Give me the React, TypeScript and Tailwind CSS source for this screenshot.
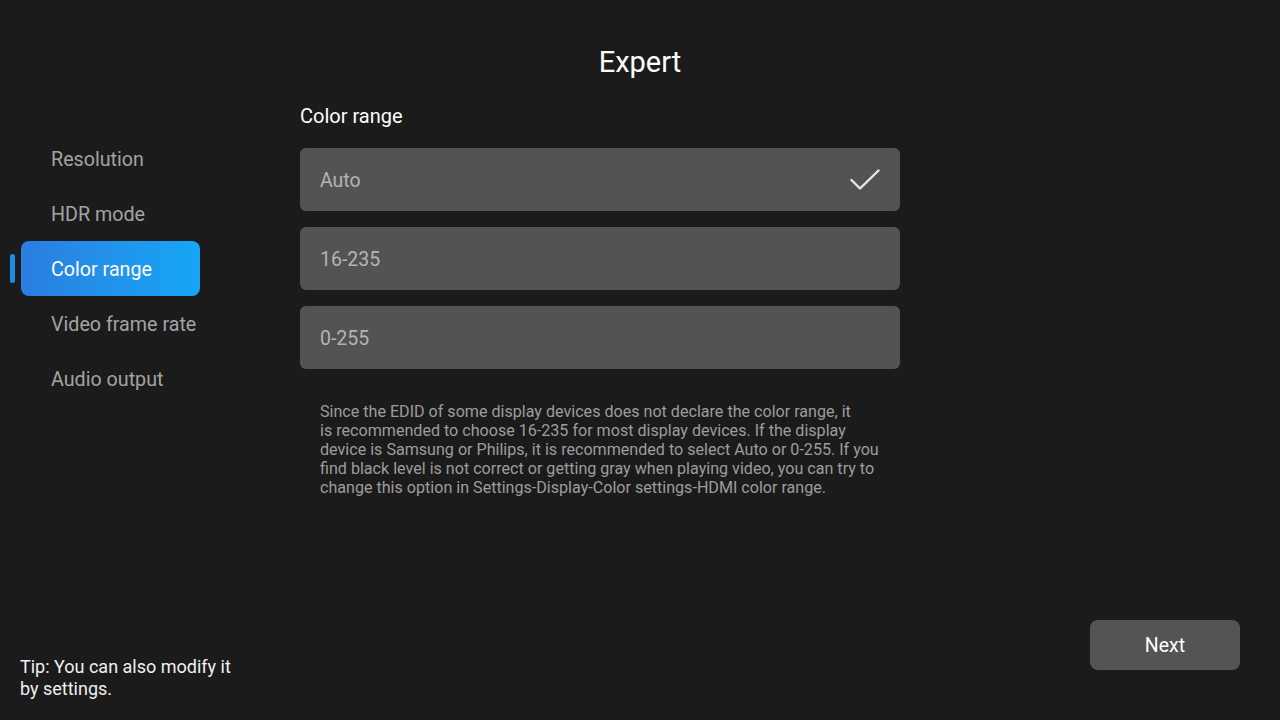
import React, { useState } from 'react';

const menuItems = ['Resolution', 'HDR mode', 'Color range', 'Video frame rate', 'Audio output'];
const options = ['Auto', '16-235', '0-255'];

const helpLines = [
    'Since the EDID of some display devices does not declare the color range, it',
    'is recommended to choose 16-235 for most display devices. If the display',
    'device is Samsung or Philips, it is recommended to select Auto or 0-255. If you',
    'find black level is not correct or getting gray when playing video, you can try to',
    'change this option in Settings-Display-Color settings-HDMI color range.',
];

export default function App() {
    const [activeMenu, setActiveMenu] = useState('Color range');
    const [selected, setSelected] = useState('Auto');

    return (
        <div className="w-[1280px] h-[720px] bg-[#1b1b1b] flex flex-col overflow-hidden font-['Roboto','Liberation_Sans',sans-serif]">
            {/* Title */}
            <div className="h-[96px] flex items-start justify-center pt-[44px]">
                <h1 className="text-[29px] leading-[36px] text-white">Expert</h1>
            </div>

            <div className="flex flex-1">
                {/* Sidebar */}
                <div className="w-[300px] pt-[35px] flex flex-col">
                    {menuItems.map(item => {
                        const active = item === activeMenu;
                        return (
                            <div key={item} className="flex items-center h-[55px]" onClick={() => setActiveMenu(item)}>
                                <div className="w-[21px] pl-[10px]">
                                    {active && <div className="w-[5px] h-[29px] rounded-full bg-[#1a8de8]" />}
                                </div>
                                <div
                                    className={
                                        active
                                            ? 'w-[179px] h-[55px] rounded-[8px] bg-gradient-to-r from-[#2a7ee0] to-[#14a6f6] flex items-center pl-[30px] pt-[3px] text-[19.7px] text-white'
                                            : 'w-[179px] h-[55px] flex items-center pl-[30px] pt-[3px] text-[19.7px] text-[#a3a3a3]'
                                    }
                                >
                                    {item}
                                </div>
                            </div>
                        );
                    })}
                </div>

                {/* Options */}
                <div className="w-[600px] flex flex-col">
                    <div className="h-[38px] flex items-center pt-[1px] text-[20px] text-white">Color range</div>
                    <div className="mt-[14px] flex flex-col gap-[16px]">
                        {options.map(opt => (
                            <div
                                key={opt}
                                onClick={() => setSelected(opt)}
                                className="h-[63px] rounded-[6px] bg-[#535353] flex items-center justify-between pl-[20px] pr-[20px] text-[19.5px] text-[#b4b4b4]"
                            >
                                <span className="pt-[3px]">{opt}</span>
                                {selected === opt && (
                                    <svg width="30" height="22" viewBox="0 0 30 22" fill="none">
                                        <path d="M1.5 11 L10 19.5 L28.5 1.5" stroke="#e8e8e8" strokeWidth="2.4" strokeLinecap="round" strokeLinejoin="round" />
                                    </svg>
                                )}
                            </div>
                        ))}
                    </div>
                    <p className="mt-[33px] pl-[20px] text-[16.1px] leading-[19px] text-[#9d9d9d] whitespace-nowrap">
                        {helpLines.map((line, i) => (
                            <span key={i} className="block">{line}</span>
                        ))}
                    </p>
                </div>
            </div>

            {/* Footer */}
            <div className="flex items-end justify-between pl-[20px] pr-[40px] pb-[20px]">
                <p className="text-[18px] leading-[22px] text-[#f0f0f0]">
                    Tip: You can also modify it
                    <br />
                    by settings.
                </p>
                <button className="w-[150px] h-[50px] mb-[30px] rounded-[8px] bg-[#545454] text-[19.5px] pt-[2px] text-white">
                    Next
                </button>
            </div>
        </div>
    );
}
